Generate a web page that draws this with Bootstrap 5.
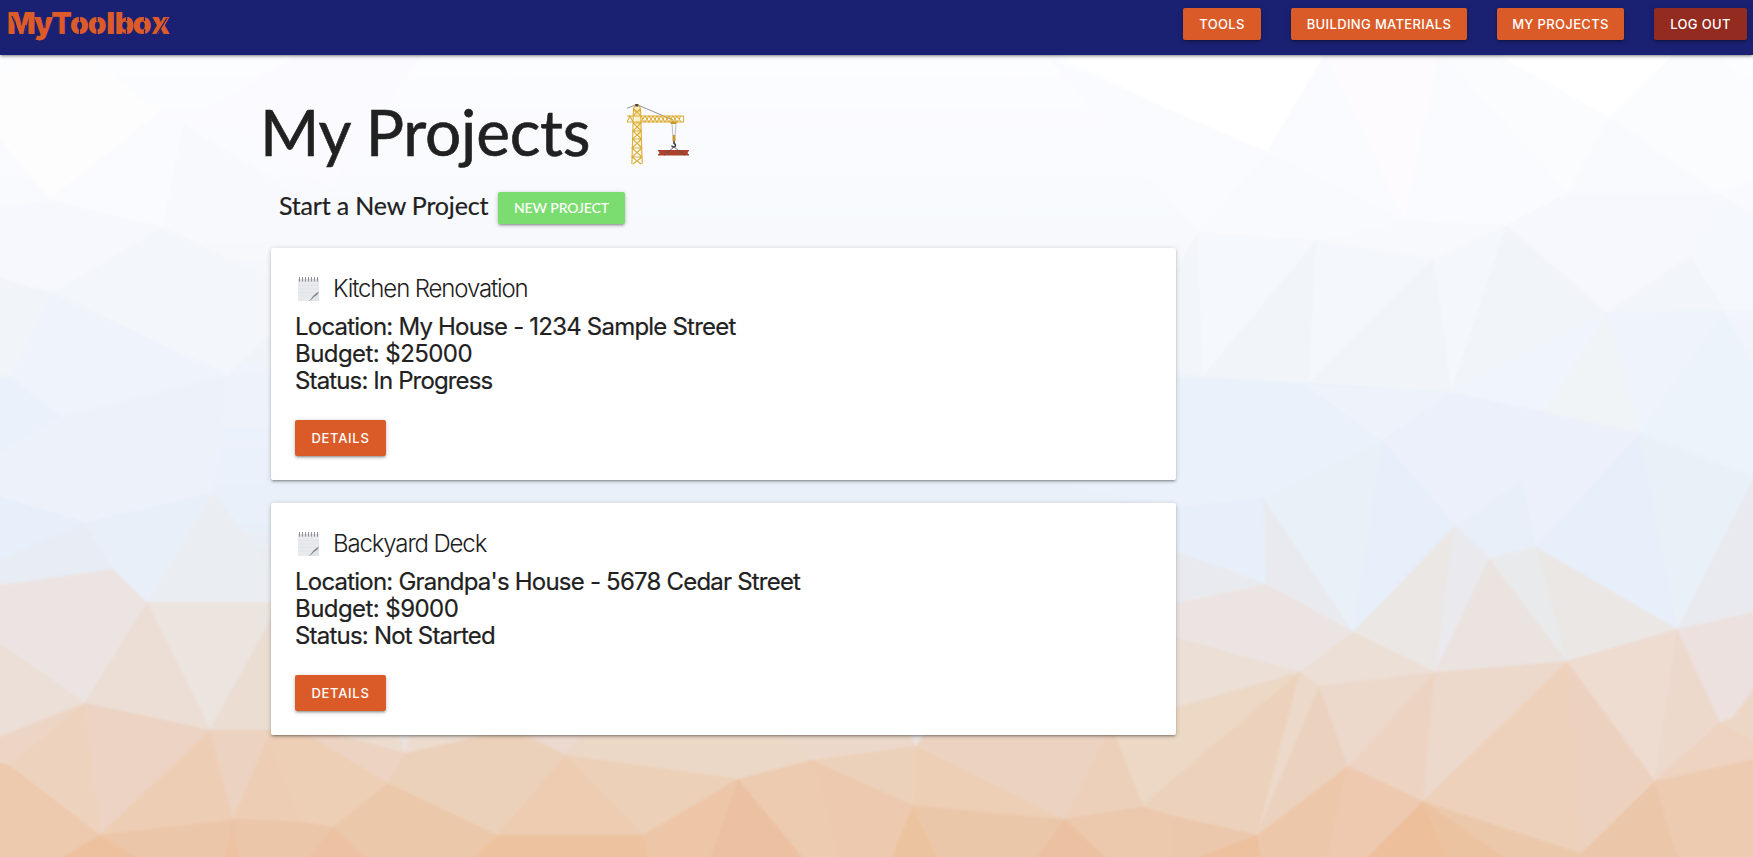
<!DOCTYPE html>
<html lang="en">
<head>
<meta charset="utf-8">
<meta name="viewport" content="width=device-width, initial-scale=1">
<title>MyToolbox - My Projects</title>
<link href="https://cdn.jsdelivr.net/npm/bootstrap@5.3.0/dist/css/bootstrap.min.css" rel="stylesheet">
<style>
body{font-family:Inter,"Liberation Sans",sans-serif;color:#212121;min-height:857px;background:#f7f9fe;position:relative;overflow:hidden;line-height:1.5}
.backdrop{position:absolute;inset:0;z-index:-1;width:1753px;height:857px}
.topbar{height:55px;background:#1a2172;padding:8px 6px 0 8px;box-shadow:0 2px 2px 0 rgba(0,0,0,.14),0 3px 1px -2px rgba(0,0,0,.12),0 1px 5px 0 rgba(0,0,0,.2)}
.navlinks{gap:30px}
.logo{position:relative;color:#dc5b28;font:900 30px/30px Inter,sans-serif;text-decoration:none;white-space:nowrap;display:inline-flex}
.logo span{display:inline-flex;justify-content:center}
.w-m{width:26.5px}.w-y{width:18px}.w-t{width:18px}.w-o{width:17.7px}.w-l{width:9.5px}.w-b{width:18px}.w-x{width:19px}
.logo svg{position:absolute;left:0;top:0}
.mbtn{--bs-btn-color:#fff;--bs-btn-hover-color:#fff;--bs-btn-border-width:0;background:#db5b28;border-radius:2px;padding:0;font-size:13px;letter-spacing:.35px;line-height:33px;height:32px;font-weight:500;text-transform:uppercase;white-space:nowrap;box-shadow:0 2px 2px 0 rgba(0,0,0,.14),0 3px 1px -2px rgba(0,0,0,.12),0 1px 5px 0 rgba(0,0,0,.2)}
.b-tools{width:78px}.b-mat{width:176px}.b-proj{width:127px}.b-out{width:93px;background:#932b20}
.b-new{width:127px;background:#7bdd70;font-family:Lato,sans-serif;font-size:14px;letter-spacing:-.1px;line-height:32px}
.b-det{width:91px;height:36px;line-height:37px;letter-spacing:.7px;margin-top:26px}
.page{width:905px;margin-left:271px;padding-top:42px}
.headline{font:400 64px/70px Lato,sans-serif;letter-spacing:-.25px;-webkit-text-stroke:.6px #212121;margin:0 0 0 -11px;width:367px;white-space:nowrap}
.crane{margin-top:6px}
.newrow{padding-left:8px;height:56px;margin-top:25px}
.sub{font:400 25px/26px Lato,sans-serif;letter-spacing:-.18px;-webkit-text-stroke:.2px #212121;margin:0;width:219px;white-space:nowrap}
.pcard{height:232px;border:0;border-radius:2px;padding:25px 24px 23px;margin-bottom:23px;box-shadow:0 2px 2px 0 rgba(0,0,0,.14),0 3px 1px -2px rgba(0,0,0,.12),0 1px 5px 0 rgba(0,0,0,.2)}
.ptitle{font-size:24px;font-weight:300;line-height:32px;letter-spacing:-1.13px;margin:0 0 8px;padding-left:3px;gap:14px}
.pinfo{font-size:24px;line-height:27px;font-weight:400;letter-spacing:-.79px;margin:0;-webkit-text-stroke:.2px #212121}
.budget{letter-spacing:-.56px}.status{letter-spacing:-.86px}
</style>
</head>
<body>
<svg class="backdrop" viewBox="0 0 1753 857" preserveAspectRatio="none" aria-hidden="true">
<defs><linearGradient id="sky" x1="0" y1="0" x2="0" y2="1"><stop offset="0" stop-color="#fff"/><stop offset=".12" stop-color="#fbfcff"/><stop offset=".27" stop-color="#f7f9fd"/><stop offset=".4" stop-color="#f0f4fb"/><stop offset=".6" stop-color="#e8f0fa"/><stop offset=".7" stop-color="#ebe6e6"/><stop offset=".8" stop-color="#ecd9cc"/><stop offset=".88" stop-color="#ecd2bf"/><stop offset="1" stop-color="#ecc7aa"/></linearGradient>
<filter id="soft" x="-2%" y="-2%" width="104%" height="104%"><feGaussianBlur stdDeviation="1"/></filter>
<symbol id="notepad" viewBox="0 0 21 24"><path fill="#e8eaee" d="M0 2h21v13L10 24H0z"/><path fill="#dfe1e5" d="M0 2h21v3H0z"/><path stroke="#d9dee6" stroke-width=".5" d="M0 8.500h21M0 12h21M0 15.500h20M0 19h15"/><path fill="#e2e4e8" d="M10 24 21 15v9z"/><path fill="#85888c" d="M10 24c4-1.500 3.500-5.500 11-9.500-1 4-4.500 4.500-6 6.500-1.500 1.800-3 2.500-5 3z"/><path stroke="#8f9195" d="M1.500 0v4.500M4.500 0v4.500M7.500 0v4.500M10.500 0v4.500M13.500 0v4.500M16.500 0v4.500M19.500 0v4.500"/></symbol></defs>
<path fill="url(#sky)" d="M0 0H1753V857H0z"/>
<g filter="url(#soft)">
<path fill="url(#sky)" d="M-15 0H1768V870H-15z"/>
<path fill="#fdfdfe" d="M25 57H88L160 113 50 200 0 140V80z"/>
<path fill="#fafbfe" d="M160 113 50 200 162 227 183 123z"/>
<path fill="#f8f9fd" d="M183 123 162 227H271L380 200 290 190z"/>
<path fill="#fbfafe" d="M300 55 420 55 330 190 205 110z"/>
<path fill="#f7f8fd" d="M-9 210 50 200 162 227 52 293-9 275z"/>
<path fill="#f3f7fb" d="M162 227 52 293 227 375 285 320V284z"/>
<path fill="#f1f4f9" d="M52 293 12 378-9 370V275z"/>
<path fill="#eff3fc" d="M52 293 12 378 62 417 227 375z"/>
<path fill="#ebf1fa" d="M12 378 62 417-9 460V375z"/>
<path fill="#edf2fa" d="M62 417 227 375 213 492 85 522-9 495V460z"/>
<path fill="#e7effa" d="M-9 494 85 522-9 564z"/>
<path fill="#e8ecf5" d="M85 522-9 564V587L113 569z"/>
<path fill="#e9eff9" d="M85 522 213 492 147 602 113 569z"/>
<path fill="#eaedf2" d="M213 492 147 602H275V575z"/>
<path fill="#fff" d="M1048 50H1326L1267 152 1170 110z"/>
<path fill="#fafbfe" d="M1048 57 1170 110 1267 152 1198 232 1170 200z"/>
<path fill="#fafbfe" d="M1326 55 1267 152 1404 220z"/>
<path fill="#f9fafd" d="M1267 152 1404 220 1317 240 1198 232z"/>
<path fill="#fdfbfd" d="M1326 55H1440L1404 220z"/>
<path fill="#fafbfe" d="M1440 52 1404 220 1506 225 1568 193z"/>
<path fill="#fbfcfe" d="M1440 52H1493L1609 117 1568 193z"/>
<path fill="#fff" d="M1493 52H1676L1609 117z"/>
<path fill="#fbfcfe" d="M1676 52H1720L1760 105V180L1718 193 1609 117z"/>
<path fill="#f9fafd" d="M1609 117 1718 193H1568z"/>
<path fill="#f8f9fd" d="M1404 223H1506L1434 258 1317 240z"/>
<path fill="#f7f8fd" d="M1568 193H1718L1690 255 1607 312 1506 225z"/>
<path fill="#f5f8fc" d="M1718 193 1760 219V310H1724L1690 255z"/>
<path fill="#f2f6fa" d="M1690 255 1724 310 1607 312zM1170 280 1198 232 1202 377 1170 370z"/>
<path fill="#f5f8fc" d="M1198 232 1317 240 1202 377z"/>
<path fill="#f1f5f9" d="M1317 240 1308 383 1202 377z"/>
<path fill="#f4f8fc" d="M1317 240 1434 258 1308 383zM1434 258 1506 225 1451 392z"/>
<path fill="#f1f5f9" d="M1434 258 1451 392 1308 383zM1506 225 1607 312 1451 392z"/>
<path fill="#f0f4fc" d="M1607 312 1451 392 1542 417z"/>
<path fill="#f0f4f7" d="M1607 312 1542 417 1640 433z"/>
<path fill="#eff4fc" d="M1607 312 1724 310 1640 433z"/>
<path fill="#edf3fa" d="M1724 310 1760 380V480L1640 433z"/>
<path fill="#ebf1fa" d="M1000 378 1202 377 1308 383 1451 392 1382 440 1263 498 1177 508 1000 470z"/>
<path fill="#eef3fb" d="M1308 386 1451 392 1382 440z"/>
<path fill="#ecf0fa" d="M1451 392 1382 440 1455 526 1536 490 1640 433z"/>
<path fill="#e7effa" d="M1170 508 1263 498 1267 584 1170 549z"/>
<path fill="#e9f1f8" d="M1263 498 1382 440 1353 632z"/>
<path fill="#e7effa" d="M1382 440 1455 526 1353 632z"/>
<path fill="#e9eff8" d="M1455 526 1522 480 1536 547 1489 558z"/>
<path fill="#ebf0fa" d="M1522 480 1642 433 1536 547z"/>
<path fill="#e7effa" d="M1536 547 1640 435 1677 629z"/>
<path fill="#e9f1f8" d="M1640 433 1760 479 1677 629z"/>
<path fill="#e9eaef" d="M1760 465V612L1677 629zM1170 550 1267 584 1170 604zM1263 498 1353 632 1267 584z"/>
<path fill="#ebe7e5" d="M1455 526 1353 632 1435 672zM1536 547 1677 629 1567 661z"/>
<path fill="#e9e9ee" d="M1455 526 1489 558 1435 672z"/>
<path fill="#ebe3e0" d="M1489 558 1567 661 1435 672z"/>
<path fill="#e9eaeb" d="M1489 558 1536 547 1567 661z"/>
<path fill="#ece4e2" d="M1170 604 1267 584 1353 632 1300 672 1170 636z"/>
<path fill="#ecdfd6" d="M1170 636 1300 672 1170 709zM1353 632 1435 672 1319 686 1300 672z"/>
<path fill="#ecd8c5" d="M1113 735 1170 710 1300 672 1170 782 1143 807z"/>
<path fill="#ecd2bc" d="M1143 807 1170 782 1300 672 1257 835 1170 815z"/>
<path fill="#ecd9c9" d="M1300 672 1319 686 1257 835z"/>
<path fill="#ebd2bf" d="M1319 686 1348 766 1257 835z"/>
<path fill="#ecd9cc" d="M1319 686 1435 672 1348 766zM1435 672 1567 661 1423 801z"/>
<path fill="#edd4c2" d="M1435 672 1348 766 1423 801z"/>
<path fill="#edd1bb" d="M1567 661 1423 801 1581 853z"/>
<path fill="#ecd1bf" d="M1567 661 1655 781 1581 853z"/>
<path fill="#eedcd1" d="M1567 661 1677 629 1655 781z"/>
<path fill="#edd8cc" d="M1677 629 1720 723 1655 781z"/>
<path fill="#ece1de" d="M1677 629 1760 611V690L1733 717 1720 723z"/>
<path fill="#ecd7c7" d="M1760 680V745L1720 723 1733 717z"/>
<path fill="#edd3c0" d="M1720 723 1760 745V760L1655 781z"/>
<path fill="#edcbb0" d="M1655 781 1760 758V866H1680z"/>
<path fill="#ecc6a9" d="M1655 781 1680 866H1570z"/>
<path fill="#ecc8ab" d="M1423 801 1590 857V866H1490z"/>
<path fill="#edc09b" d="M1423 801 1359 866H1450z"/>
<path fill="#ecc3a1" d="M1423 801 1450 866H1518z"/>
<path fill="#eec9af" d="M1348 766 1423 801 1359 866H1325z"/>
<path fill="#edc7aa" d="M1348 766 1325 866H1262L1257 835z"/>
<path fill="#ebc8ac" d="M1170 815 1257 835 1180 866H1108L1143 807z"/>
<path fill="#edc09e" d="M1257 835 1262 866H1175z"/>
<path fill="#ece4e2" d="M-9 586 113 569 147 602 85 703-9 637z"/>
<path fill="#ecdfd7" d="M-9 637 85 703-9 740z"/>
<path fill="#ecded4" d="M147 602 85 703 210 730z"/>
<path fill="#ebe4df" d="M147 602H275V615L210 730z"/>
<path fill="#ebddd2" d="M275 612V730H210z"/>
<path fill="#edd5c5" d="M-9 740 85 703 9 765-9 763z"/>
<path fill="#edd3bd" d="M85 703 100 835 9 765z"/>
<path fill="#ecd3c3" d="M85 703 210 730 100 835z"/>
<path fill="#edceb5" d="M210 730 233 819 100 835zM267 730 300 821 233 819z"/>
<path fill="#ecd2c0" d="M210 730H271L233 819z"/>
<path fill="#edc9ae" d="M9 765 100 835 50 866H-9V760z"/>
<path fill="#edc19e" d="M100 835 155 866H48z"/>
<path fill="#ecc6a8" d="M100 835 233 819 300 821 333 827 303 866H150z"/>
<path fill="#ecc2a2" d="M233 819 239 866H224zM333 827 376 866H302z"/>
<path fill="#edcfb6" d="M267 730H330L388 783 333 827 300 821z"/>
<path fill="#ecd3c2" d="M300 730 405 753 388 783z"/>
<path fill="#ecdcd0" d="M325 730H510L405 753z"/>
<path fill="#eae2e0" d="M397 730H412L405 753z"/>
<path fill="#ecd1ba" d="M405 753 485 735H520L566 755 497 835 388 783z"/>
<path fill="#ecc8aa" d="M388 783 497 835 465 866H376L333 827z"/>
<path fill="#ecd9cf" d="M520 730H588L566 755z"/>
<path fill="#edccb1" d="M566 755 643 835H497z"/>
<path fill="#ecd0b8" d="M566 755 738 779 643 835z"/>
<path fill="#ecd8c6" d="M588 730H780L812 760 738 779 566 755z"/>
<path fill="#ecd8ca" d="M780 730H916V746L812 760z"/>
<path fill="#eae2e0" d="M907 730H928L916 746z"/>
<path fill="#ecd1ba" d="M812 760 916 746 913 805z"/>
<path fill="#edcfb6" d="M916 746 1065 819 913 805z"/>
<path fill="#ecd3c1" d="M916 746 928 730H1110L1065 819z"/>
<path fill="#ecd0b9" d="M1111 725 1065 819 1143 807z"/>
<path fill="#edc39f" d="M497 835H643L650 866H465z"/>
<path fill="#edc6a7" d="M738 779 643 835 650 866H707z"/>
<path fill="#ebc1a1" d="M738 779 707 866H810z"/>
<path fill="#edcbb0" d="M738 779 812 760 841 866H810z"/>
<path fill="#edcaaf" d="M812 760 913 805 888 866H841z"/>
<path fill="#ecc39f" d="M913 805 942 866H888z"/>
<path fill="#ebc7aa" d="M913 805 1065 819 1030 866H942z"/>
<path fill="#ebc1a1" d="M1065 819 1114 866H1030z"/>
<path fill="#ecc8ad" d="M1065 819 1143 807 1170 815V866H1114z"/>
</g>
</svg>

<nav class="topbar d-flex justify-content-between align-items-start">
<a class="logo" href="#"><span class="w-m">M</span><span class="w-y">y</span><span class="w-t">T</span><span class="w-o">o</span><span class="w-o">o</span><span class="w-l">l</span><span class="w-b">b</span><span class="w-o">o</span><span class="w-x">x</span>
<svg width="166" height="34" fill="none" stroke="#1a2172" stroke-width="1.2" aria-hidden="true"><path d="M4 8 11 26M16 26 18 17M37 9V20M51 9V27M71.500 8V13M71.500 21V27M89 8V13M89 21V27M118.500 8V13M118.500 21V27M136.500 8V13M136.500 21V27M149 26 159 10"/></svg></a>
<div class="navlinks d-flex">
<a class="btn mbtn b-tools" href="#">Tools</a>
<a class="btn mbtn b-mat" href="#">Building Materials</a>
<a class="btn mbtn b-proj" href="#">My Projects</a>
<a class="btn mbtn b-out" href="#">Log Out</a>
</div>
</nav>

<main class="page">
<div class="d-flex align-items-start">
<h1 class="headline">My Projects</h1>
<svg class="crane" width="64" height="62" viewBox="0 0 64 62" fill="none" aria-hidden="true">
<path stroke="#777" stroke-width=".8" d="M0 5.300 9.700 1.500 46 17"/>
<g stroke="#dcae35" stroke-width="1.100">
<path fill="#fbefc5" d="M6.500 5.500 8 2h3.500l2 3.500L15.200 61M6.500 5.500 4.900 61"/>
<path d="M0 13H56.500V19H0M0 19 3 13 6 19M14 19 18 13 22 19 26 13 30 19 34 13 38 19 42 13 46 19 50 13 54 19M14 13 18 19 22 13 26 19 30 13 34 19 38 13 42 19 46 13 50 19 54 13"/>
<path d="M6 8H14M6 20H14M6 28H14.500M5.500 36H14.500M5 45H15M5 54H15M6 20 14.500 28M14 20 6 28 14.500 36M14.500 28 5.500 36 15 45M14.500 36 5 45 15 54M15 45 5 54 14 61M15 54 6 61M7 6 14 13M13 6 6 13"/>
</g>
<path fill="#444" d="M8.300 1h3v2.500h-3z"/>
<path fill="#c79a2c" d="M43.500 18.500h6v2.500h-6zM45.500 32h3v6h-3z"/>
<path stroke="#aaa" stroke-width=".8" d="M45 21 46 33M49 21 48 33"/>
<path stroke="#333" stroke-width="1.500" d="M47 38v2.500c2 .5 2 3.500-.3 3.500-1 0-1.800-.6-1.800-1.600"/>
<path fill="#ad412d" d="M31 47h31v1.300l-1.200.5v2l1.200.5v1.200H31v-1.200l1.200-.5v-2L31 48.300z"/>
<path stroke="#555" stroke-width=".8" d="M37 52.500 47 44 58 52.500"/>
</svg>
</div>
<div class="newrow d-flex">
<h2 class="sub">Start a New Project</h2>
<a class="btn mbtn b-new" href="#">New Project</a>
</div>
<section class="card pcard">
<h3 class="ptitle d-flex align-items-center"><svg width="21" height="24" aria-hidden="true"><use href="#notepad"/></svg><span>Kitchen Renovation</span></h3>
<p class="pinfo">Location: My House - 1234 Sample Street<br><span class="budget">Budget: $25000</span><br><span class="status">Status: In Progress</span></p>
<div><a class="btn mbtn b-det" href="#">Details</a></div>
</section>
<section class="card pcard">
<h3 class="ptitle d-flex align-items-center"><svg width="21" height="24" aria-hidden="true"><use href="#notepad"/></svg><span>Backyard Deck</span></h3>
<p class="pinfo">Location: Grandpa's House - 5678 Cedar Street<br><span class="budget">Budget: $9000</span><br>Status: Not Started</p>
<div><a class="btn mbtn b-det" href="#">Details</a></div>
</section>
</main>
<script src="https://cdn.jsdelivr.net/npm/bootstrap@5.3.0/dist/js/bootstrap.bundle.min.js"></script>
</body>
</html>
